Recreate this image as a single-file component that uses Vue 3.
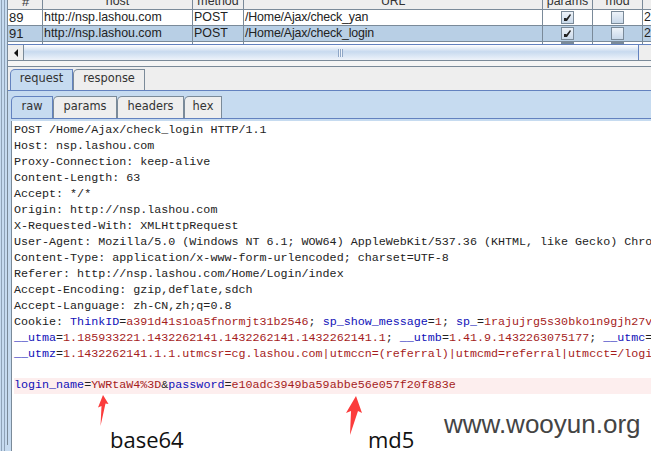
<script setup>
const plain = [
  'POST /Home/Ajax/check_login HTTP/1.1',
  'Host: nsp.lashou.com',
  'Proxy-Connection: keep-alive',
  'Content-Length: 63',
  'Accept: */*',
  'Origin: http://nsp.lashou.com',
  'X-Requested-With: XMLHttpRequest',
  'User-Agent: Mozilla/5.0 (Windows NT 6.1; WOW64) AppleWebKit/537.36 (KHTML, like Gecko) Chrome/42.0.2311.152 Safari/537.36',
  'Content-Type: application/x-www-form-urlencoded; charset=UTF-8',
  'Referer: http://nsp.lashou.com/Home/Login/index',
  'Accept-Encoding: gzip,deflate,sdch',
  'Accept-Language: zh-CN,zh;q=0.8'
]
const tabs = ['params', 'headers', 'hex']
const rows = [
  { id: '89', url: '/Home/Ajax/check_yan', sel: false },
  { id: '91', url: '/Home/Ajax/check_login', sel: true }
]
</script>

<template>
  <div class="page">
    <div class="frame">
      <div class="table">
        <div class="row head">
          <div class="c c-id">#</div><div class="c c-host">host</div><div class="c c-method">method</div><div class="c c-url">URL</div><div class="c c-params">params</div><div class="c c-mod">mod</div><div class="c c-last"></div>
        </div>
        <div v-for="r in rows" :key="r.id" class="row" :class="{ sel: r.sel }">
          <div class="c c-id">{{ r.id }}</div><div class="c c-host l">http://nsp.lashou.com</div><div class="c c-method l">POST</div><div class="c c-url l">{{ r.url }}</div>
          <div class="c c-params"><span class="check">
            <svg width="9" height="9" viewBox="0 0 9 9"><path d="M1 5 L1 8 L4 8 L8 2 L7 1 L3.5 5.5 L3 5 Z" fill="#222"/></svg>
          </span></div>
          <div class="c c-mod"><span class="check"></span></div>
          <div class="c c-last l">2</div>
        </div>
        <div class="row stub">
          <div class="c c-id"></div><div class="c c-host"></div><div class="c c-method"></div><div class="c c-url"></div>
          <div class="c c-params"><span class="stubbox"></span></div><div class="c c-mod"><span class="stubbox"></span></div><div class="c c-last"></div>
        </div>
      </div>
      <div class="scroll">
        <div class="arrow"><svg width="6" height="8" viewBox="0 0 6 8"><path d="M5 0 V8 L1 4 Z" fill="#111"/></svg></div>
        <div class="thumb"><span class="grip"></span></div>
        <div class="track"></div>
      </div>
      <div class="tabs1">
        <div class="tab on big">request</div>
        <div class="tab big off2">response</div>
      </div>
      <div class="panel">
        <div class="tabs2">
          <div class="tab on small">raw</div>
          <div v-for="t in tabs" :key="t" class="tab small">{{ t }}</div>
        </div>
        <div class="text">
          <div v-for="l in plain" :key="l" class="ln">{{ l }}</div>
          <div class="ln">Cookie: <b>ThinkID</b>=<i>a391d41s1oa5fnormjt31b2546</i>; <b>sp_show_message</b>=<i>1</i>; <b>sp_</b>=<i>1rajujrg5s30bko1n9gjh27v</i></div>
          <div class="ln"><b>__utma</b>=<i>1.185933221.1432262141.1432262141.1432262141.1</i>; <b>__utmb</b>=<i>1.41.9.1432263075177</i>; <b>__utmc</b>=</div>
          <div class="ln"><b>__utmz</b>=<i>1.1432262141.1.1.utmcsr=cg.lashou.com|utmccn=(referral)|utmcmd=referral|utmcct=/login</i></div>
          <div class="ln"></div>
          <div class="ln pink"><b>login_name</b>=<i>YWRtaW4%3D</i>&amp;<b>password</b>=<i>e10adc3949ba59abbe56e057f20f883e</i></div>
          <div class="notes">
            <span class="note n1">base64</span>
            <span class="note n2">md5</span>
            <span class="mark">www.wooyun.org</span>
          </div>
        </div>
      </div>
    </div>
    <svg class="arr a1" width="16" height="34" viewBox="0 0 16 34"><path d="M7 0 L12.5 9 L9.5 8.5 L4.5 31 L5.5 11 L2 12.5 Z" fill="#fb3b3b"/></svg>
    <svg class="arr a2" width="18" height="42" viewBox="0 0 18 42"><path d="M10 0 L16 17 L12 15 L4 39 L5 15 L0 17 Z" fill="#fb3b3b"/></svg>
  </div>
</template>

<style>
html, body { margin: 0; background: #fff; overflow: hidden; }
</style>

<style scoped>
.page { position: relative; width: 651px; height: 451px; overflow: hidden; background: #fff; font-family: "Liberation Sans", sans-serif; padding-left: 7px; box-sizing: border-box; background-image: linear-gradient(90deg, #c6dbf0 0 1px, #8fa3b8 1px 2px, #c6dbf0 2px 4px, #8fa3b8 4px 5px, #c6dbf0 5px 7px); }
.frame { height: 451px; border-left: 1px solid #7a8a99; background: #f5f5f5; }
.table { margin-top: -6px; font-size: 12.4px; color: #222; }
.row { display: flex; height: 15px; background: #fff; border-bottom: 1px solid #7a8a99; }
.row.head { height: 15px; background: #eee; color: #333; }
.row.sel { background: #b8cfe5; }
.row.stub { height: 2px; border: 0; }
.c { box-sizing: border-box; border-right: 1px solid #7a8a99; text-align: center; line-height: 15px; overflow: hidden; white-space: nowrap; }
.l { text-align: left; padding-left: 1px; }
.c-id { width: 35px; text-align: left; padding-left: 1px; font-size: 13px; }
.head .c-id { text-align: center; }
.c-host { width: 150px; }
.c-method { width: 51px; }
.c-url { width: 299px; letter-spacing: -0.18px; }
.c-params { width: 50px; }
.c-mod { width: 50px; }
.c-last { flex: 1; border-right: 0; }
.check { box-sizing: border-box; width: 13px; height: 13px; margin: 1px auto 0; background: linear-gradient(#eef3f9, #c9d9ea); border: 1px solid #7a8a99; display: flex; align-items: center; justify-content: center; }
.stubbox { display: block; width: 13px; height: 2px; margin: 0 auto; background: #7a8a99; }
.scroll { display: flex; height: 15px; border-bottom: 1px solid #7a8a99; border-top: 1px solid #6382bf; }
.arrow { box-sizing: border-box; width: 16px; background: #eee; border-right: 1px solid #7a8a99; display: flex; align-items: center; justify-content: center; }
.thumb { width: 615px; background: linear-gradient(#fff 0%, #c8daef 45%, #eef3fa 100%); display: flex; align-items: center; justify-content: center; border-right: 1px solid #6382bf; flex: none; box-sizing: border-box; }
.grip { width: 5px; height: 8px; background: repeating-linear-gradient(90deg, #8ea6c6 0 1px, #eef3fa 1px 2px); margin-left: 18px; }
.track { flex: 1; background: #eee; }
.tabs1 { display: flex; background: #eee; height: 25px; margin-top: 5px; border-top: 1px solid #7a8a99; padding: 0 0 0 2px; box-sizing: border-box; align-items: flex-end; border-bottom: 1px solid #6382bf; }
.tab { box-sizing: border-box; font-family: "DejaVu Sans", sans-serif; color: #333; border: 1px solid #7a8a99; border-bottom: 0; border-radius: 5px 0 0 0; background: #eee; text-align: center; font-size: 11.4px; }
.tab.on { background: #c6dbf0; border-color: #6382bf; }
.big { height: 21px; line-height: 17px; width: 63px; }
.off2 { width: 72px; }
.panel { background: #c6dbf0; padding: 0 0 0 3px; }
.tabs2 { display: flex; height: 28px; box-sizing: border-box; align-items: flex-end; border-bottom: 1px solid #6382bf; }
.small { line-height: 18px; flex: none; height: 22px; }
.tabs2 .on { width: 42px; }
.tabs2 .tab:nth-child(2) { width: 64px; }
.tabs2 .tab:nth-child(3) { width: 67px; }
.tabs2 .tab:nth-child(4) { width: 38px; }
.text { margin-top: 2px; background: #fff; border-left: 1px solid #7a8a99; padding: 2.4px 0 0 2px; font-family: "Liberation Mono", monospace; font-size: 11.7px; color: #222; white-space: nowrap; height: 340px; overflow: hidden; }
.ln { height: 15.94px; line-height: 15.94px; }
.ln b { font-weight: 400; color: #1010b8; }
.ln i { font-style: normal; color: #a51c1c; }
.pink { background: #fdeeee; }
.notes { position: relative; }
.note { position: absolute; font-family: "Open Sans", sans-serif; font-size: 22px; color: #111; top: 30px; line-height: 30px; }
.n1 { left: 96px; }
.n2 { left: 354px; }
.mark { position: absolute; left: 430px; top: 15px; font-family: "Liberation Sans", sans-serif; font-size: 26px; color: #444; line-height: 30px; }
.arr { position: absolute; }
.a1 { left: 96px; top: 395px; }
.a2 { left: 346px; top: 396px; }
</style>
